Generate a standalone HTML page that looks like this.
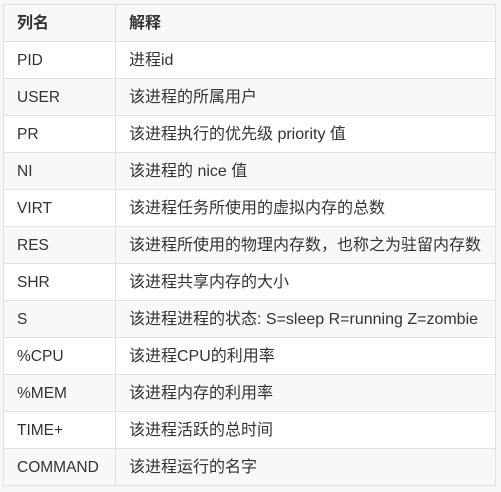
<!DOCTYPE html>
<html><head><meta charset="utf-8"><style>
html,body{margin:0;padding:0;background:#f6f6f6;width:501px;height:492px;overflow:hidden}
table{position:absolute;left:3px;top:4px;border-collapse:collapse;font-family:"Liberation Sans","Noto Sans CJK SC",sans-serif;font-size:16px;color:#333}
td,th{border:1px solid #dfe2e5;height:37px;padding:2px 0 0 13px;text-align:left;box-sizing:border-box;white-space:nowrap;vertical-align:middle;line-height:20px}
td:first-child{font-size:15.5px}
th{font-weight:bold;background:#f6f8fa;font-size:16px}
tr:nth-child(odd) td{background:#f6f8fa}
tr:nth-child(even) td{background:#fff}
.c1{width:112px}.c2{width:380px}
</style></head><body>
<table>
<tr><th class="c1">列名</th><th class="c2">解释</th></tr>
<tr><td>PID</td><td>进程id</td></tr>
<tr><td>USER</td><td>该进程的所属用户</td></tr>
<tr><td>PR</td><td>该进程执行的优先级 priority 值</td></tr>
<tr><td>NI</td><td>该进程的 nice 值</td></tr>
<tr><td>VIRT</td><td>该进程任务所使用的虚拟内存的总数</td></tr>
<tr><td>RES</td><td>该进程所使用的物理内存数，也称之为驻留内存数</td></tr>
<tr><td>SHR</td><td>该进程共享内存的大小</td></tr>
<tr><td>S</td><td>该进程进程的状态: S=sleep R=running Z=zombie</td></tr>
<tr><td>%CPU</td><td>该进程CPU的利用率</td></tr>
<tr><td>%MEM</td><td>该进程内存的利用率</td></tr>
<tr><td>TIME+</td><td>该进程活跃的总时间</td></tr>
<tr><td>COMMAND</td><td>该进程运行的名字</td></tr>
</table>
</body></html>
